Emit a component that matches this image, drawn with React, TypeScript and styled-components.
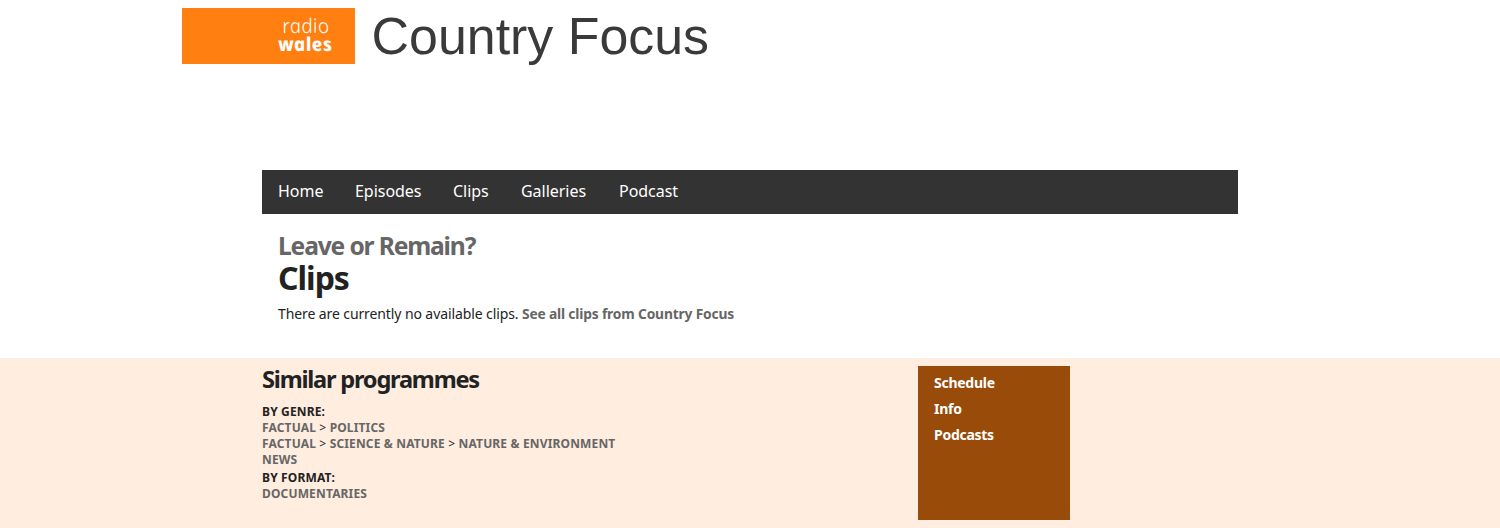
import React from 'react';
import styled, { createGlobalStyle } from 'styled-components';

const Global = createGlobalStyle`
  * { box-sizing: border-box; }
  body { margin: 0; background: #fff; color: #222; font-family: "Noto Sans", sans-serif; }
`;
const Page = styled.div`height: 528px; overflow: hidden;`;
const Brand = styled.header`
  display: flex;
  align-items: flex-start;
  height: 170px;
  padding: 8px 0 0 182px;
`;
const Logo = styled.div`
  display: flex;
  flex-direction: column;
  align-items: center;
  width: 173px;
  height: 56px;
  padding: 8px 23px 0 96px;
  background: #ff7f11;
  color: #fff;
`;
/* Upright rendering of the italic cut, which has the single-storey "a" of the wordmark. */
const LogoLine = styled.span<{ $bold?: boolean }>`
  font-style: italic;
  font-size: ${p => (p.$bold ? 19 : 20)}px;
  line-height: 19px;
  font-weight: ${p => (p.$bold ? 800 : 300)};
  letter-spacing: ${p => (p.$bold ? 0.3 : 0.2)}px;
  transform: skewX(12deg);
`;
const Title = styled.h1`
  margin: -1px 0 0 16.6px;
  font: 400 51.9px/58px "Liberation Sans", sans-serif;
  color: #3a3a3a;
  white-space: nowrap;
`;
const Nav = styled.nav`
  display: flex;
  width: 976px;
  height: 44px;
  margin: 0 auto;
  padding: 0 16px;
  gap: 32px;
  background: #333;
  color: #fff;
  font-size: 16px;
  line-height: 43px;
`;
const NavItem = styled.a<{ $w: number }>`
  width: ${p => p.$w}px;
  white-space: nowrap;
  letter-spacing: -0.03px;
`;
const Main = styled.main`width: 976px; height: 144px; margin: 0 auto; padding: 16px 16px 0;`;
const Parent = styled.div`
  font-size: 24.6px;
  font-weight: 700;
  line-height: 32px;
  color: #666;
  letter-spacing: -1.15px;
`;
const Heading = styled.h2`
  margin: 0;
  font-size: 32px;
  font-weight: 700;
  line-height: 31px;
  letter-spacing: -1px;
`;
const Note = styled.p`margin: 11px 0 0; font-size: 14px; line-height: 20px; letter-spacing: -0.1px;`;
const Link = styled.a`color: #666; font-weight: 700;`;
const NoteLink = styled(Link)`font-size: 13.8px; letter-spacing: -0.17px;`;
const Footer = styled.footer`height: 170px; background: #ffeddf;`;
const Inner = styled.div`display: flex; width: 976px; margin: 0 auto; padding-top: 8px;`;
const Similar = styled.section`width: 656px;`;
const SimilarTitle = styled.h3`
  margin: -1px 0 11px;
  font-size: 23.6px;
  font-weight: 700;
  line-height: 28px;
  letter-spacing: -1.21px;
`;
const Group = styled.div`
  margin-bottom: 2px;
  font-size: 12px;
  line-height: 16px;
  letter-spacing: 0.15px;
`;
const Label = styled.div`font-weight: 700;`;
const Side = styled.aside`
  width: 152px;
  height: 154px;
  padding: 4px 16px;
  background: #994b09;
  color: #fff;
  font-size: 14px;
  font-weight: 700;
  line-height: 26px;
  letter-spacing: -0.27px;
`;

export default function App() {
  return (
    <Page>
      <Global />
      <Brand>
        <Logo>
          <LogoLine>radio</LogoLine>
          <LogoLine $bold>wales</LogoLine>
        </Logo>
        <Title>Country Focus</Title>
      </Brand>
      <Nav>
        <NavItem $w={45}>Home</NavItem>
        <NavItem $w={66}>Episodes</NavItem>
        <NavItem $w={36}>Clips</NavItem>
        <NavItem $w={66}>Galleries</NavItem>
        <NavItem $w={60}>Podcast</NavItem>
      </Nav>
      <Main>
        <Parent>Leave or Remain?</Parent>
        <Heading>Clips</Heading>
        <Note>There are currently no available clips. <NoteLink>See all clips from Country Focus</NoteLink></Note>
      </Main>
      <Footer>
        <Inner>
          <Similar>
            <SimilarTitle>Similar programmes</SimilarTitle>
            <Group>
              <Label>BY GENRE:</Label>
              <div><Link>FACTUAL</Link> &gt; <Link>POLITICS</Link></div>
              <div><Link>FACTUAL</Link> &gt; <Link>SCIENCE &amp; NATURE</Link> &gt; <Link>NATURE &amp; ENVIRONMENT</Link></div>
              <div><Link>NEWS</Link></div>
            </Group>
            <Group>
              <Label>BY FORMAT:</Label>
              <div><Link>DOCUMENTARIES</Link></div>
            </Group>
          </Similar>
          <Side>
            <div>Schedule</div>
            <div>Info</div>
            <div>Podcasts</div>
          </Side>
        </Inner>
      </Footer>
    </Page>
  );
}
